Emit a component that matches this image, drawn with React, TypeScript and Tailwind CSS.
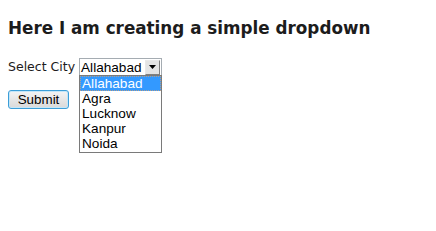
const cities = ["Allahabad", "Agra", "Lucknow", "Kanpur", "Noida"];

export default function App() {
  return (
    <div className="min-h-[231px] w-[436px] bg-white px-2 pt-[17px] text-black">
      <h3 className="font-['DejaVu_Sans',sans-serif] text-[16.8px] font-bold leading-[22px] text-[#1c1c1c]">
        Here I am creating a simple dropdown
      </h3>

      <div className="mt-[19px] flex items-start">
        <span className="mt-[1px] font-['DejaVu_Sans',sans-serif] text-[12.5px] leading-[16px] text-[#1c1c1c]">
          Select City
        </span>

        <div className="relative ml-[4px]">
          <div className="flex h-[18px] w-[83px] items-center border border-[#a5acb2] bg-white font-['Liberation_Sans',Arial,sans-serif] text-[13.6px] leading-[15px]">
            <span className="flex-1 pl-[1px]">Allahabad</span>
            <span className="mr-[1px] flex h-[15px] w-[15px] items-center justify-center border border-b-[#808080] border-l-[#e8e8e8] border-r-[#808080] border-t-[#e8e8e8] bg-[#e4e4e4]">
              <svg width="7" height="4" viewBox="0 0 7 4">
                <path d="M0 0h7L3.5 4z" fill="#000" />
              </svg>
            </span>
          </div>

          <ul className="absolute left-0 top-[17px] w-[83px] border border-[#7a7a7a] bg-white pb-[1px] font-['Liberation_Sans',Arial,sans-serif] text-[13.6px] leading-[15px]">
            {cities.map((c, i) => (
              <li
                key={c}
                className={
                  i === 0
                    ? "h-[15px] border border-dotted border-[#e9a25e]/70 bg-[#3399ff] pl-[1px] leading-[13px] text-white"
                    : "h-[15px] pl-[2px]"
                }
              >
                {c}
              </li>
            ))}
          </ul>
        </div>
      </div>

      <button className="mt-[14px] flex h-[19px] w-[61px] items-center justify-center rounded-[3px] border border-[#3c9ed8] bg-gradient-to-b from-[#f4f4f4] to-[#d9d9d9] font-['Liberation_Sans',Arial,sans-serif] text-[13.4px] leading-[15px] text-black shadow-[inset_0_0_0_1px_#c4e6f8]">
        Submit
      </button>
    </div>
  );
}
